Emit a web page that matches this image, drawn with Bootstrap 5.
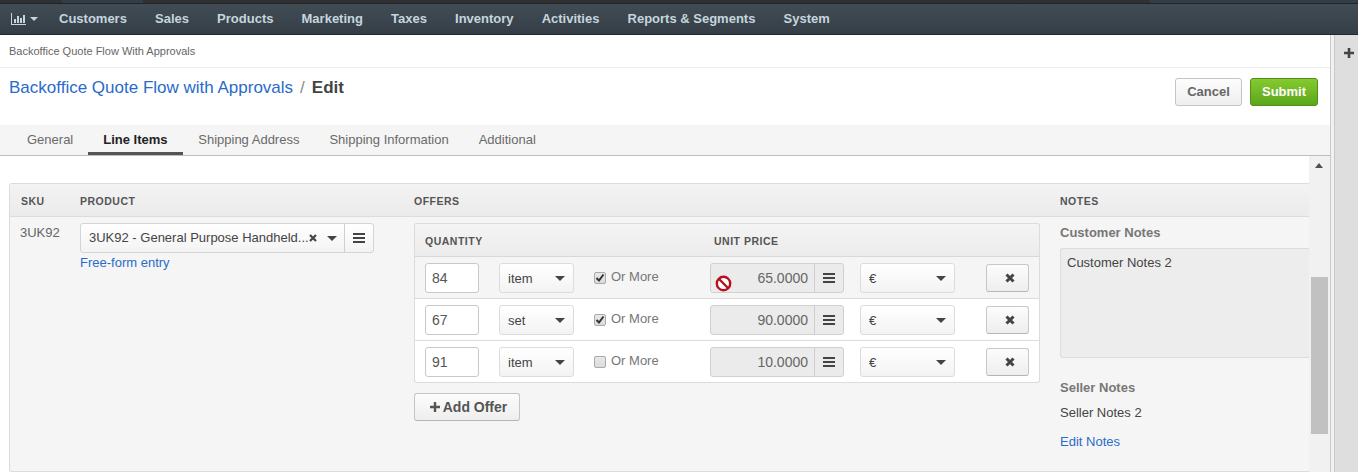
<!DOCTYPE html>
<html lang="en">
<head>
  <meta charset="UTF-8">
  <title>Backoffice Quote Flow with Approvals</title>
  <link href="https://cdn.jsdelivr.net/npm/bootstrap@5.3.0/dist/css/bootstrap.min.css" rel="stylesheet">
  <style>
    html, body { height: 472px; overflow: hidden; }
    body { font-family: "Liberation Sans", Arial, sans-serif; font-size: 13px; color: #4d4d4d; background: #fff; }
    a { color: #2a6bc9; text-decoration: none; }
    .top-strip { height: 4px; background: #2f3133; border-bottom: 1px solid #20252a; }
    .strip-light { background: #333f47; }
    .strip-a { width: 62px; }
    .strip-b { width: 81px; }
    .strip-c { width: 1007px; }
    .main-nav { height: 31px; background: linear-gradient(#414c55, #353e47); border-bottom: 1px solid #22282d; padding-left: 11px; }
    .main-nav a { color: #c5d5dd; font-weight: 700; font-size: 13px; }
    .nav-gap { gap: 28.1px; margin-left: 21px; }
    .chart-toggle { gap: 4px; }
    .caret-down { width: 0; height: 0; border-left: 4px solid transparent; border-right: 4px solid transparent; border-top: 4px solid currentColor; }
    .caret-dark { border-left-width: 5px; border-right-width: 5px; border-top: 5px solid #444; flex: none; }
    .page-wrap { height: 437px; background: #f1f1f1; }
    .content-pane { width: 1331px; border-right: 1px solid #c9c9c9; background: #fff; flex: none; }
    .side-pane { width: 24px; background: #dedede; border-left: 1px solid #c9c9c9; margin-left: 3px; padding: 7px 0 0 9px; flex: none; }
    .crumb-bar { height: 33px; font-size: 11px; color: #666; padding-left: 9px; border-bottom: 1px solid #ededed; }
    .title-bar { height: 57px; padding: 10px 12px 0 9px; }
    .page-title { font-size: 17px; line-height: 22px; gap: 7px; margin-top: -1px; }
    .page-title .sep { color: #888; }
    .page-title b { color: #444; }
    .act-btn { height: 28px; font-size: 13px; font-weight: 700; border-radius: 3px; padding: 0; width: 67px; }
    .btn-cancel { color: #666; background: linear-gradient(#fdfdfd, #eee); border: 1px solid #c4c4c4; }
    .btn-submit { color: #fff; width: 68px; background: linear-gradient(#84ca2f, #5ca61c); border: 1px solid #4f9015; }
    .tab-bar { height: 31px; background: #f5f5f5; border-bottom: 1px solid #bdbdbd; padding-left: 12px; }
    .tab-item { padding: 0 15px; height: 30px; line-height: 29px; color: #6a6a6a; font-size: 13px; }
    .tab-item.on { color: #222; font-weight: 700; border-bottom: 3px solid #555; width: 95px; }
    .scroll-area { height: 316px; overflow: hidden; }
    .scroll-body { width: 1309px; padding: 27px 0 0 9px; flex: none; }
    .scroll-track { width: 21px; background: #f1f1f1; flex: none; }
    .track-up { height: 20px; padding: 7px 0 0 5px; }
    .track-arrow { width: 0; height: 0; margin-left: 1px; border-left: 4.5px solid transparent; border-right: 4.5px solid transparent; border-bottom: 5px solid #505050; }
    .track-thumb { height: 157px; width: 17px; margin-top: 101px; background: #c1c1c1; margin-left: 2px; }
    .items-panel { width: 1300px; height: 289px; border: 1px solid #dcdcdc; border-right: 0; border-radius: 3px 0 0 3px; background: #f5f5f5; }
    .items-head { height: 33px; padding-top: 4px; background: linear-gradient(#f3f3f3, #ebebeb); border-bottom: 1px solid #dcdcdc; }
    .head-label { font-size: 10.5px; font-weight: 700; letter-spacing: .5px; color: #555; text-transform: uppercase; }
    .col-sku { width: 70px; padding-left: 11px; flex: none; }
    .col-product { width: 334px; flex: none; }
    .col-offers { width: 646px; flex: none; }
    .col-notes { flex: 1; }
    .sku-val { color: #666; font-size: 13px; padding: 6px 0 0 10px; }
    .cell-group { height: 30px; display: flex; background: linear-gradient(#fff, #f3f3f3); border: 1px solid #d4d4d4; border-radius: 3px; }
    .product-select { width: 294px; margin-top: 6px; }
    .sel-main { width: 263px; flex: none; padding-left: 8px; color: #444; white-space: nowrap; }
    .sel-main .sel-text { width: 220px; flex: none; overflow: hidden; }
    .sel-main .caret-dark { margin-left: 10px; }
    .side-btn { border-left: 1px solid #d0d0d0; width: 29px; flex: none; }
    .free-link { margin-top: 1px; line-height: 17px; }
    .offers-table { width: 626px; margin-top: 6px; }
    .offers-head { height: 34px; padding-top: 3px; background: linear-gradient(#f4f4f4, #ececec); border: 1px solid #dcdcdc; border-bottom-color: #d8d8d8; border-radius: 3px 3px 0 0; }
    .qty-head { width: 299px; padding-left: 10px; flex: none; }
    .offers-list { border: 1px solid #dcdcdc; border-top: 0; border-radius: 0 0 3px 3px; background: #fff; }
    .offer-row { height: 42px; border-bottom: 1px solid #dcdcdc; padding: 1px 0 0 10px; }
    .offer-row:last-child { border-bottom: 0; height: 41px; }
    .offer-row.tinted { background: #f5f5f5; }
    .qty-box { width: 54px; height: 30px; background: #fff; border: 1px solid #c9c9c9; border-radius: 3px; padding-left: 6px; line-height: 28px; font-size: 14px; color: #555; margin-right: 20px; flex: none; }
    .pick-box { height: 30px; background: linear-gradient(#fff, #f3f3f3); border: 1px solid #dcdcdc; border-radius: 3px; padding: 1px 8px 0; color: #444; flex: none; justify-content: space-between; }
    .unit-pick { width: 75px; margin-right: 20px; }
    .cur-pick { width: 95px; margin-right: 31px; }
    .more-check { width: 116px; flex: none; color: #777; gap: 5px; margin-top: -2px; }
    .fake-check { width: 12px; height: 12px; border: 1px solid #aaa; border-radius: 2px; background: linear-gradient(#e8e8e8, #dcdcdc); margin-top: 2px; }
    .price-box { width: 134px; height: 30px; background: #ebebeb; border: 1px solid #d0d0d0; border-radius: 3px; margin-right: 16px; flex: none; position: relative; }
    .price-val { flex: 1; text-align: right; padding-right: 6px; line-height: 28px; font-size: 14px; color: #666; }
    .price-btn { width: 29px; border-left: 1px solid #cfcfcf; }
    .no-sign { position: absolute; left: 4px; top: 11px; }
    .del-btn { width: 43px; height: 28px; background: linear-gradient(#fcfcfc, #eee); border: 1px solid #c8c8c8; border-bottom-color: #b5b5b5; border-radius: 3px; padding: 0 0 0 5px; flex: none; }
    .add-btn { height: 28px; width: 106px; margin-top: 10px; padding: 0 0 0 3px; gap: 3px; background: linear-gradient(#fcfcfc, #eee); border: 1px solid #c4c4c4; border-bottom-color: #b5b5b5; border-radius: 3px; font-weight: 700; font-size: 14px; color: #555; }
    .notes-title { font-weight: 700; color: #777; line-height: 15px; }
    .notes-box { height: 110px; background: #ededed; border: 1px solid #dcdcdc; border-right: 0; border-radius: 3px 0 0 3px; padding: 5px 6px; margin-top: 8px; color: #444; line-height: 17px; }
    .seller-title { margin-top: 22px; }
    .notes-plain { color: #444; line-height: 16px; margin-top: 10px; }
    .notes-edit { line-height: 16px; margin-top: 13px; }
  </style>
</head>
<body>
  <div class="top-strip d-flex">
    <div class="strip-a"></div>
    <div class="strip-b strip-light"></div>
    <div class="strip-c"></div>
    <div class="flex-grow-1 strip-light"></div>
  </div>
  <nav class="main-nav d-flex align-items-center">
    <a href="#" class="chart-toggle d-flex align-items-center">
      <svg width="15" height="12" viewBox="0 0 15 12"><path fill="currentColor" d="M0 0h1v11h14v1H0zM3 6h2v4H3zM6 3h2v7H6zM9 5h2v5H9zM12 2h2v8h-2z"/></svg>
      <span class="caret-down"></span>
    </a>
    <div class="nav-gap d-flex">
      <a href="#">Customers</a><a href="#">Sales</a><a href="#">Products</a><a href="#">Marketing</a><a href="#">Taxes</a><a href="#">Inventory</a><a href="#">Activities</a><a href="#">Reports &amp; Segments</a><a href="#">System</a>
    </div>
  </nav>

  <div class="page-wrap d-flex">
    <div class="content-pane">
      <div class="crumb-bar d-flex align-items-center">Backoffice Quote Flow With Approvals</div>
      <div class="title-bar d-flex justify-content-between">
        <div class="page-title d-flex"><a href="#">Backoffice Quote Flow with Approvals</a><span class="sep">/</span><b>Edit</b></div>
        <div class="d-flex gap-2 align-items-start">
          <button class="btn act-btn btn-cancel" type="button">Cancel</button>
          <button class="btn act-btn btn-submit" type="button">Submit</button>
        </div>
      </div>
      <div class="tab-bar d-flex">
        <a class="tab-item" href="#">General</a>
        <a class="tab-item on" href="#">Line Items</a>
        <a class="tab-item" href="#">Shipping Address</a>
        <a class="tab-item" href="#">Shipping Information</a>
        <a class="tab-item" href="#">Additional</a>
      </div>
      <div class="scroll-area d-flex">
        <div class="scroll-body">
          <div class="items-panel">
            <div class="items-head d-flex align-items-center head-label">
              <div class="col-sku">SKU</div>
              <div class="col-product">Product</div>
              <div class="col-offers">Offers</div>
              <div class="col-notes">Notes</div>
            </div>
            <div class="d-flex">
              <div class="col-sku sku-val">3UK92</div>
              <div class="col-product">
                <div class="cell-group product-select">
                  <div class="sel-main d-flex align-items-center">
                    <span class="sel-text">3UK92 - General Purpose Handheld...</span>
                    <svg width="8" height="8" viewBox="0 0 8 8"><path d="M1 1l6 6M7 1l-6 6" stroke="#444" stroke-width="2.2"/></svg>
                    <span class="caret-down caret-dark"></span>
                  </div>
                  <div class="side-btn d-flex align-items-center justify-content-center">
                    <svg width="12" height="10" viewBox="0 0 12 10"><path fill="#444" d="M0 0h12v2H0zM0 4h12v2H0zM0 8h12v2H0z"/></svg>
                  </div>
                </div>
                <div class="free-link"><a href="#">Free-form entry</a></div>
              </div>
              <div class="col-offers">
                <div class="offers-table">
                  <div class="offers-head d-flex align-items-center head-label">
                    <div class="qty-head">Quantity</div>
                    <div>Unit Price</div>
                  </div>
                  <div class="offers-list">
                    <div class="offer-row tinted d-flex align-items-center">
                      <div class="qty-box">84</div>
                      <div class="pick-box unit-pick d-flex align-items-center">item<span class="caret-down caret-dark"></span></div>
                      <div class="more-check d-flex align-items-center"><span class="fake-check d-flex"><svg width="10" height="10" viewBox="0 0 10 10"><path d="M1.5 5l2.5 2.5L8.5 1.5" fill="none" stroke="#333" stroke-width="2"/></svg></span>Or More</div>
                      <div class="price-box d-flex">
                        <div class="price-val">65.0000</div>
                        <div class="price-btn d-flex align-items-center justify-content-center"><svg width="12" height="10" viewBox="0 0 12 10"><path fill="#444" d="M0 0h12v2H0zM0 4h12v2H0zM0 8h12v2H0z"/></svg></div>
                        <svg class="no-sign" width="17" height="17" viewBox="0 0 17 17"><circle cx="8.5" cy="8.5" r="6.7" fill="#fff" stroke="#b8111c" stroke-width="2.4"/><path d="M4 4l9 9" stroke="#b8111c" stroke-width="2.4"/></svg>
                      </div>
                      <div class="pick-box cur-pick d-flex align-items-center">€<span class="caret-down caret-dark"></span></div>
                      <button class="del-btn d-flex align-items-center justify-content-center" type="button"><svg width="10" height="10" viewBox="0 0 10 10"><path d="M1.5 1.5l7 7M8.5 1.5l-7 7" stroke="#444" stroke-width="3"/></svg></button>
                    </div>
                    <div class="offer-row d-flex align-items-center">
                      <div class="qty-box">67</div>
                      <div class="pick-box unit-pick d-flex align-items-center">set<span class="caret-down caret-dark"></span></div>
                      <div class="more-check d-flex align-items-center"><span class="fake-check d-flex"><svg width="10" height="10" viewBox="0 0 10 10"><path d="M1.5 5l2.5 2.5L8.5 1.5" fill="none" stroke="#333" stroke-width="2"/></svg></span>Or More</div>
                      <div class="price-box d-flex">
                        <div class="price-val">90.0000</div>
                        <div class="price-btn d-flex align-items-center justify-content-center"><svg width="12" height="10" viewBox="0 0 12 10"><path fill="#444" d="M0 0h12v2H0zM0 4h12v2H0zM0 8h12v2H0z"/></svg></div>
                      </div>
                      <div class="pick-box cur-pick d-flex align-items-center">€<span class="caret-down caret-dark"></span></div>
                      <button class="del-btn d-flex align-items-center justify-content-center" type="button"><svg width="10" height="10" viewBox="0 0 10 10"><path d="M1.5 1.5l7 7M8.5 1.5l-7 7" stroke="#444" stroke-width="3"/></svg></button>
                    </div>
                    <div class="offer-row d-flex align-items-center">
                      <div class="qty-box">91</div>
                      <div class="pick-box unit-pick d-flex align-items-center">item<span class="caret-down caret-dark"></span></div>
                      <div class="more-check d-flex align-items-center"><span class="fake-check"></span>Or More</div>
                      <div class="price-box d-flex">
                        <div class="price-val">10.0000</div>
                        <div class="price-btn d-flex align-items-center justify-content-center"><svg width="12" height="10" viewBox="0 0 12 10"><path fill="#444" d="M0 0h12v2H0zM0 4h12v2H0zM0 8h12v2H0z"/></svg></div>
                      </div>
                      <div class="pick-box cur-pick d-flex align-items-center">€<span class="caret-down caret-dark"></span></div>
                      <button class="del-btn d-flex align-items-center justify-content-center" type="button"><svg width="10" height="10" viewBox="0 0 10 10"><path d="M1.5 1.5l7 7M8.5 1.5l-7 7" stroke="#444" stroke-width="3"/></svg></button>
                    </div>
                  </div>
                </div>
                <button class="add-btn d-flex align-items-center justify-content-center" type="button"><svg width="10" height="10" viewBox="0 0 10 10"><path fill="#555" d="M3.8 0h2.4v3.8H10v2.4H6.2V10H3.8V6.2H0V3.8h3.8z"/></svg>Add Offer</button>
              </div>
              <div class="col-notes pt-2">
                <div class="notes-title">Customer Notes</div>
                <div class="notes-box">Customer Notes 2</div>
                <div class="notes-title seller-title">Seller Notes</div>
                <div class="notes-plain">Seller Notes 2</div>
                <div class="notes-edit"><a href="#">Edit Notes</a></div>
              </div>
            </div>
          </div>
        </div>
        <div class="scroll-track">
          <div class="track-up"><div class="track-arrow"></div></div>
          <div class="track-thumb"></div>
        </div>
      </div>
    </div>
    <div class="side-pane"><svg width="10" height="10" viewBox="0 0 10 10"><path fill="#444" d="M3.7 0h2.6v3.7H10v2.6H6.3V10H3.7V6.3H0V3.7h3.7z"/></svg></div>
  </div>
</body>
</html>
